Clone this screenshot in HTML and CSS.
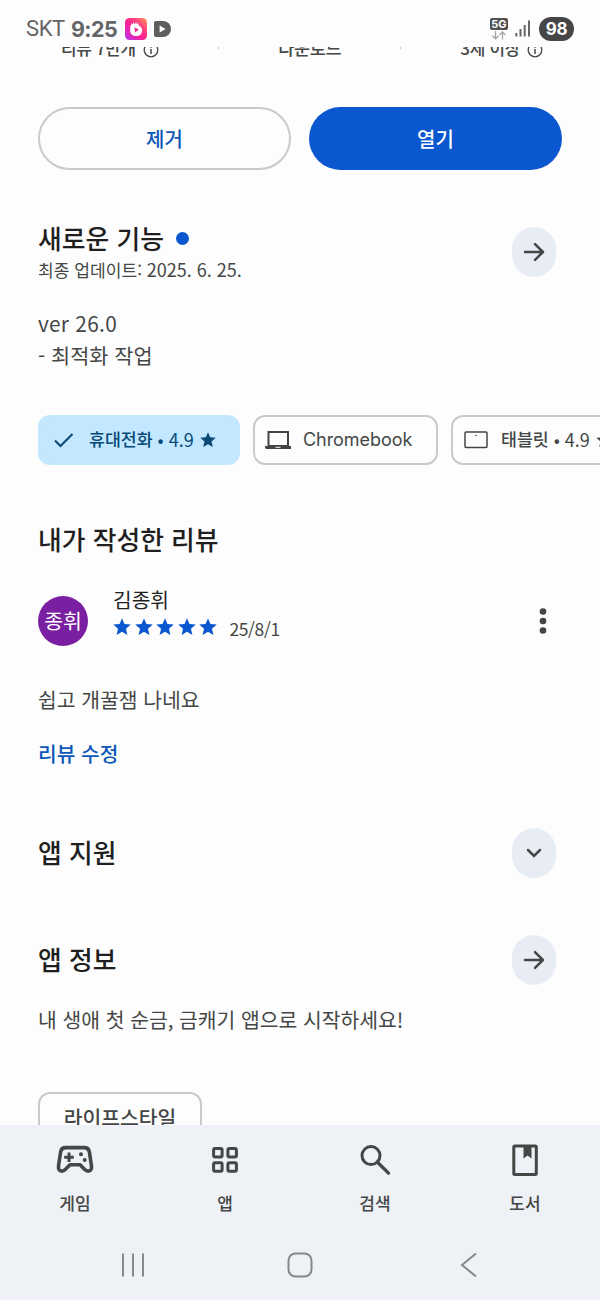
FILE: index.html
```html
<!DOCTYPE html>
<html lang="ko">
<head>
<meta charset="utf-8">
<title>앱 상세정보</title>
<link rel="stylesheet" href="styles.css">
</head>
<body>
<svg class="defs" width="0" height="0">
  <symbol id="star" viewBox="0 0 20 20"><path d="M10 .3l2.700 6.400 7 .6-5.300 4.600 1.600 6.900L10 15.200l-6 3.600 1.600-6.900L.3 7.300l7-.6z"/></symbol>
  <symbol id="info" viewBox="0 0 16 16"><circle cx="8" cy="8" r="6.800" fill="none" stroke="currentColor" stroke-width="1.300"/><path d="M8 7v5M8 4v1.700" stroke="currentColor" stroke-width="1.500"/></symbol>
  <symbol id="arrow" viewBox="0 0 24 24"><path d="M3 12h18M13 4.200l8 7.800-8 7.800" fill="none" stroke="currentColor" stroke-width="2.500" stroke-linecap="round" stroke-linejoin="round"/></symbol>
</svg>
<header class="status">
  <span class="carrier">SKT</span><span class="clock">9:25</span>
  <svg class="app-a" width="22" height="22" viewBox="0 0 22 22">
    <defs><linearGradient id="g" x1="0" y1="1" x2="1" y2="0"><stop offset="0" stop-color="#b536f5"/><stop offset=".45" stop-color="#fc1f92"/><stop offset=".7" stop-color="#ff447c"/><stop offset="1" stop-color="#ff9a55"/></linearGradient></defs>
    <rect width="22" height="22" rx="4.500" fill="url(#g)"/>
    <path d="M5.300 9q-.3-1.800 1-2l.2-2 .9 1.400L8.700 4l.7 2.200L11.500 4l.2 2.200 2-1-.2 2.300q3.500 1 3.700 4.500a5.400 5.400 0 0 1-6 6q-3.500.2-5.300-2.300Q4.700 13 5.300 9z" fill="#fff"/>
    <path d="M9.500 9.600l4.300 2-3.800 3z" fill="#f0208f"/>
  </svg>
  <svg class="app-b" width="17" height="16" viewBox="0 0 17 16"><path d="M2 0h7a8 8 0 0 1 0 16H2q-2 0-2-2V2q0-2 2-2z" fill="#5e5e60"/><path d="M5.600 4.500l6 3.500-6 3.500z" fill="#fff"/></svg>
  <div class="network"><span class="five-g">5G</span>
    <svg width="16" height="9" viewBox="0 0 16 9"><path d="M4.500 0v7.500M1.500 4.800l3 3 3-3M11.500 8.500V1M8.500 4l3-3 3 3" fill="none" stroke="#a5a5a5" stroke-width="1.300"/></svg>
  </div>
  <svg class="signal" width="16" height="17" viewBox="0 0 16 17"><path d="M1.300 13v3.500M5.500 9v7.500M9.700 5v11.500M14 .5v16" stroke="#666" stroke-width="2"/></svg>
  <span class="battery">98</span>
</header>
<main class="page">
  <div class="stats">
    <div class="stat rating">리뷰 7만개<svg width="16" height="16"><use href="#info"/></svg></div>
    <i class="divider"></i>
    <div class="stat downloads">다운로드</div>
    <i class="divider"></i>
    <div class="stat age">3세 이상<svg width="16" height="16"><use href="#info"/></svg></div>
  </div>
  <div class="actions"><button class="btn outline">제거</button><button class="btn filled">열기</button></div>
  <section class="news">
    <div class="head">
      <div><h2>새로운 기능<i class="new-dot"></i></h2><p class="updated">최종 업데이트: <span class="date">2025. 6. 25.</span></p></div>
      <button class="round"><svg width="24" height="24"><use href="#arrow"/></svg></button>
    </div>
    <p class="notes"><span class="version">ver 26.0</span><br>- 최적화 작업</p>
  </section>
  <div class="chips">
    <div class="chip selected">
      <svg class="check" width="20" height="16" viewBox="0 0 20 16"><path d="M1 8.500l5.500 5.500L18.500 2" fill="none" stroke="#074a77" stroke-width="2.100"/></svg>
      <span class="chip-name">휴대전화</span><span class="bullet">•</span><span class="score">4.9</span><svg class="chip-star" width="16" height="16"><use href="#star"/></svg>
    </div>
    <div class="chip chromebook">
      <svg width="26" height="20" viewBox="0 0 26 20"><rect x="3.500" y="2" width="19.500" height="14" fill="none" stroke="#444" stroke-width="2"/><path d="M0 16h26v3H1.500Q0 19 0 17z" fill="#444"/><path d="M10.500 17.300h5" stroke="#fff"/></svg>
      <span>Chromebook</span>
    </div>
    <div class="chip tablet">
      <svg width="24" height="18" viewBox="0 0 24 18"><rect x="1" y="1" width="22" height="15.500" rx="1" fill="none" stroke="#444" stroke-width="1.500"/><circle cx="12" cy="4.500" r=".8" fill="#444"/></svg>
      <span class="chip-name">태블릿</span><span class="bullet">•</span><span class="score">4.9</span><svg class="chip-star" width="16" height="16"><use href="#star"/></svg>
    </div>
  </div>
  <section class="my-review">
    <h2>내가 작성한 리뷰</h2>
    <div class="reviewer">
      <div class="avatar">종휘</div>
      <div class="who"><div class="name">김종휘</div>
        <div class="stars"><svg width="18" height="18"><use href="#star"/></svg><svg width="18" height="18"><use href="#star"/></svg><svg width="18" height="18"><use href="#star"/></svg><svg width="18" height="18"><use href="#star"/></svg><svg width="18" height="18"><use href="#star"/></svg><span>25/8/1</span></div>
      </div>
      <svg class="more" width="8" height="28" viewBox="0 0 8 28"><g fill="#444"><circle cx="4" cy="4.500" r="3.300"/><circle cx="4" cy="14" r="3.300"/><circle cx="4" cy="23.500" r="3.300"/></g></svg>
    </div>
    <p class="review-text">쉽고 개꿀잼 나네요</p>
    <a class="edit">리뷰 수정</a>
  </section>
  <section class="head support"><h2>앱 지원</h2><button class="round"><svg width="24" height="24" viewBox="0 0 24 24"><path d="M6 9l6 6 6-6" fill="none" stroke="currentColor" stroke-width="2.500" stroke-linecap="round"/></svg></button></section>
  <section class="head about"><h2>앱 정보</h2><button class="round"><svg width="24" height="24"><use href="#arrow"/></svg></button></section>
  <p class="summary">내 생애 첫 순금, 금캐기 앱으로 시작하세요!</p>
  <div class="tag">라이프스타일</div>
</main>
<footer class="bottom">
  <nav class="tabs">
    <div class="tab"><svg width="40" height="36" viewBox="0 0 40 36"><path d="M10.500 5.600h19q4 0 4.800 4l2.200 14.500q.3 5-3.200 5-2 0-3.300-1.300l-5-5H15l-5 5Q8.700 29.100 6.700 29.100q-3.500 0-3.200-5L5.700 9.600q.8-4 4.800-4z" fill="none" stroke="#444746" stroke-width="3.600" stroke-linejoin="round"/><path d="M14 10.500v9.500M9.200 15.200h9.600" stroke="#444746" stroke-width="3"/><circle cx="26" cy="12.300" r="2" fill="#444746"/><circle cx="29.700" cy="18" r="2" fill="#444746"/></svg><span>게임</span></div>
    <div class="tab"><svg width="40" height="36" viewBox="0 0 40 36"><g fill="none" stroke="#444746" stroke-width="3"><rect x="8.600" y="6.500" width="8.500" height="8.500" rx="1.500"/><rect x="22.900" y="6.500" width="8.500" height="8.500" rx="1.500"/><rect x="8.600" y="20.800" width="8.500" height="8.500" rx="1.500"/><rect x="22.900" y="20.800" width="8.500" height="8.500" rx="1.500"/></g></svg><span>앱</span></div>
    <div class="tab"><svg width="40" height="36" viewBox="0 0 40 36"><circle cx="16" cy="13.600" r="9" fill="none" stroke="#444746" stroke-width="3"/><path d="M22.300 20l11.200 11.200" stroke="#444746" stroke-width="3.300" stroke-linecap="round"/></svg><span>검색</span></div>
    <div class="tab"><svg width="40" height="36" viewBox="0 0 40 36"><rect x="8.800" y="4" width="22.500" height="28.500" rx="1" fill="none" stroke="#444746" stroke-width="3"/><path d="M18.500 4h8v12.500l-4-3-4 3z" fill="#444746"/></svg><span>도서</span></div>
  </nav>
  <div class="system">
    <svg width="24" height="26" viewBox="0 0 24 26"><path d="M2 1.500v23M12 1.500v23M22 1.500v23" stroke="#85888c" stroke-width="2"/></svg>
    <svg class="home" width="26" height="26" viewBox="0 0 26 26"><rect x="1.500" y="1.500" width="23" height="23" rx="7" fill="none" stroke="#85888c" stroke-width="2"/></svg>
    <svg width="18" height="26" viewBox="0 0 18 26"><path d="M16 1.500L2 13l14 11.500" fill="none" stroke="#85888c" stroke-width="2"/></svg>
  </div>
</footer>
</body>
</html>
```
FILE: styles.css
```css
* { box-sizing: border-box; }
body { margin: 0; width: 600px; height: 1300px; overflow: hidden; background: #fdfdfd; color: #444746; font-family: "Noto Sans CJK KR", sans-serif; display: flex; flex-direction: column; }
h2, p { margin: 0; }
svg { display: block; flex: none; }
button { padding: 0; border: 0; font-family: inherit; }
.defs { display: none; }

.status { height: 47px; flex: none; display: flex; align-items: center; padding: 10px 26px 0; color: #656567; white-space: nowrap; }
.carrier { width: 45px; font: 22px/22px Roboto, sans-serif; letter-spacing: -0.4px; }
.clock { width: 54px; font: 700 21.5px/22px Inter, sans-serif; letter-spacing: -0.6px; }
.app-b { margin-left: 7px; }
.network { margin-left: auto; display: flex; flex-direction: column; align-items: center; gap: 1px; width: 18px; }
.five-g { width: 18px; height: 12px; border-radius: 2px; background: #505052; color: #fff; font: 700 11px/12px Inter, sans-serif; text-align: center; }
.signal { margin-left: 7px; }
.battery { margin-left: 8px; width: 35px; height: 24px; border-radius: 12px; background: #464648; color: #fff; font: 700 17px/24px Inter, sans-serif; letter-spacing: -0.4px; text-align: center; }

.page { height: 1078px; flex: none; overflow: hidden; display: flex; flex-direction: column; padding-left: 38px; }
.page > * { flex: none; }
.stats { display: flex; justify-content: space-between; margin: -9px 57px 0 23px; height: 20px; font-size: 17px; line-height: 20px; font-weight: 500; }
.stat { display: flex; align-items: center; gap: 7px; letter-spacing: -0.35px; }
.stat svg { margin-top: 3px; }
.downloads { font-size: 17.5px; }
.divider { width: 1px; height: 11px; background: #c5c7c5; }
.actions { display: flex; gap: 18px; margin-top: 49px; }
.btn { width: 253px; height: 63px; border-radius: 32px; font-size: 20px; line-height: 60px; font-weight: 500; }
.outline { border: 2px solid #c9cac9; background: transparent; color: #0b57b8; }
.filled { background: #0b57d0; color: #fff; }

.head { display: flex; justify-content: space-between; padding-right: 44px; }
h2 { color: #1f1f1f; font-size: 25.8px; line-height: 34px; font-weight: 500; }
.round { width: 44px; height: 50px; border-radius: 22px; background: #e8ecf5; color: #444746; display: flex; align-items: center; justify-content: center; }
.news { margin-top: 57px; }
.news h2 { display: flex; align-items: center; margin-top: -6px; }
.new-dot { width: 13px; height: 13px; margin-left: 12px; border-radius: 50%; background: #0b57d0; }
.updated { font-size: 17.1px; line-height: 24px; margin-top: 2px; }
.date { font-size: 18px; }
.notes { margin-top: 25px; font-size: 20.8px; line-height: 32px; }
.version { letter-spacing: 0.3px; }

.chips { display: flex; gap: 13px; margin-top: 44px; overflow: hidden; }
.chip { flex: none; height: 50px; display: flex; align-items: center; border: 2px solid #c9cac9; border-radius: 12px; font-size: 18px; line-height: 44px; }
.chip > span { margin-bottom: 2px; }
.chip-name { font-weight: 500; font-size: 17.3px; }
.chip .bullet { margin: 0 5px 2px; }
.chip-star { fill: currentColor; margin-left: 6px; }
.selected { width: 202px; border-color: #c2e7ff; background: #c2e7ff; color: #074a77; padding-left: 14px; }
.check { margin-right: 15px; }
.chromebook { width: 185px; padding-left: 10px; gap: 12px; }
.chromebook > span { font-family: Inter, sans-serif; letter-spacing: -0.05px; margin-bottom: 0; }
.tablet { width: 220px; padding-left: 11px; }
.tablet svg:first-child { margin-right: 13px; }

.my-review { margin-top: 57px; }
.reviewer { display: flex; margin-top: 30px; height: 62px; }
.avatar { width: 50px; height: 50px; margin-top: 10px; border-radius: 50%; background: #7b1fa2; color: #fff; font-size: 20.5px; line-height: 49px; text-align: center; }
.who { margin-left: 25px; }
.name { color: #1f1f1f; font-size: 20.3px; line-height: 26px; }
.stars { display: flex; align-items: center; gap: 3.500px; height: 30px; fill: #0b57d0; }
.stars span { margin: 4px 0 0 9px; font-size: 17.5px; line-height: 24px; letter-spacing: -0.4px; }
.more { margin: 21px 53px 0 auto; }
.review-text { margin-top: 36px; font-size: 20.4px; line-height: 30px; }
.edit { display: block; margin-top: 24px; color: #0b57b8; font-size: 20.3px; line-height: 30px; font-weight: 500; }
.support { margin-top: 60px; }
.about { margin-top: 57px; }
.support h2, .about h2 { line-height: 48px; }
.summary { margin-top: 19px; font-size: 20.4px; line-height: 30px; }
.tag { width: 164px; height: 50px; margin-top: 58px; border: 2px solid #c9cac9; border-radius: 12px; text-align: center; font-size: 20.4px; line-height: 46px; font-weight: 500; }

.bottom { height: 175px; flex: none; background: #eef1f6; }
.tabs { display: grid; grid-template-columns: repeat(4, 150px); padding-top: 17px; height: 110px; }
.tab { display: flex; flex-direction: column; align-items: center; gap: 13px; font-size: 17px; line-height: 24px; font-weight: 500; }
.system { display: flex; justify-content: space-between; padding: 17px 122px 0 121px; }
.home { margin-right: 5px; }
```
